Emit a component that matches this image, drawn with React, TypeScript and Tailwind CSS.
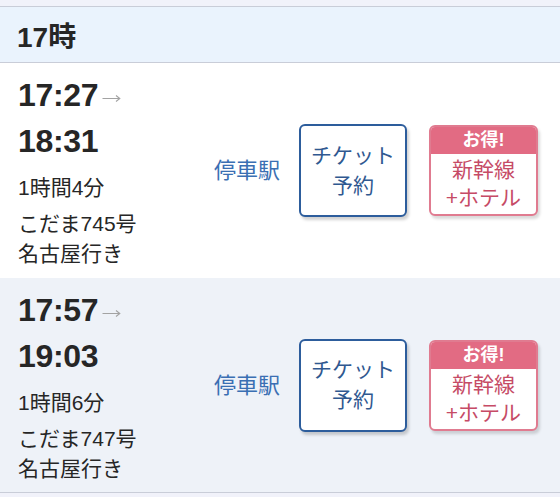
const FONT = { fontFamily: '"Liberation Sans", "Noto Sans CJK JP", sans-serif' };

type Train = {
  dep: string;
  arr: string;
  duration: string;
  name: string;
  dest: string;
};

const trains: Train[] = [
  { dep: "17:27", arr: "18:31", duration: "1時間4分", name: "こだま745号", dest: "名古屋行き" },
  { dep: "17:57", arr: "19:03", duration: "1時間6分", name: "こだま747号", dest: "名古屋行き" },
];

function Arrow() {
  return (
    <svg width="19" height="9" viewBox="0 0 19 9" className="ml-[4px] inline-block align-[3px]">
      <path d="M0.5 4.5H17.5M14 1.5L17.8 4.5L14 7.5" fill="none" stroke="#a3a3a3" strokeWidth="1.1" />
    </svg>
  );
}

function TrainRow({ train, shaded }: { train: Train; shaded: boolean }) {
  return (
    <div className={`flex items-center pl-[18px] ${shaded ? "h-[214px] bg-[#eef2f8]" : "h-[215px] bg-white"}`}>
      <div className="flex w-[196px] flex-col text-[#262626]">
        <div className="h-[46px] text-[32px] font-bold leading-[46px] tracking-[-0.3px]">
          {train.dep}
          <Arrow />
        </div>
        <div className="h-[46px] text-[32px] font-bold leading-[46px] tracking-[-0.3px]">{train.arr}</div>
        <div className="mt-[9px] text-[21px] leading-[30px]">{train.duration}</div>
        <div className="mt-[6px] text-[21px] leading-[30px]">{train.name}</div>
        <div className="text-[21px] leading-[30px]">{train.dest}</div>
      </div>
      <div className="w-[85px] text-[22px] text-[#3a6fb3]">停車駅</div>
      <div className="flex h-[93px] w-[108px] flex-col items-center justify-center rounded-[6px] border-2 border-[#2d5d9c] bg-white text-[21px] leading-[30px] text-[#2f5890] shadow-[2px_3px_3px_rgba(0,0,0,0.18)]">
        <div>チケット</div>
        <div>予約</div>
      </div>
      <div className="ml-[22px] flex h-[91px] w-[109px] flex-col overflow-hidden rounded-[6px] border-2 border-[#e07b90] bg-white shadow-[2px_3px_3px_rgba(0,0,0,0.15)]">
        <div className="flex h-[27px] items-center justify-center bg-[#e26b83] text-[18px] font-bold text-white">お得!</div>
        <div className="flex flex-1 flex-col items-center justify-center text-[21px] leading-[28px] text-[#c64b66]">
          <div>新幹線</div>
          <div>+ホテル</div>
        </div>
      </div>
    </div>
  );
}

export default function App() {
  return (
    <div className="h-[497px] w-[560px] overflow-hidden bg-[#f1f2fa]" style={FONT}>
      <div className="mt-[6px] flex h-[57px] items-center border-y border-[#c9cdd8] bg-[#eaf3fd] pl-[17px] pt-[7px] text-[28px] font-bold text-[#262626]">
        17時
      </div>
      {trains.map((t, i) => (
        <TrainRow key={t.dep} train={t} shaded={i % 2 === 1} />
      ))}
      <div className="border-t border-[#c9cdd8]" />
    </div>
  );
}
